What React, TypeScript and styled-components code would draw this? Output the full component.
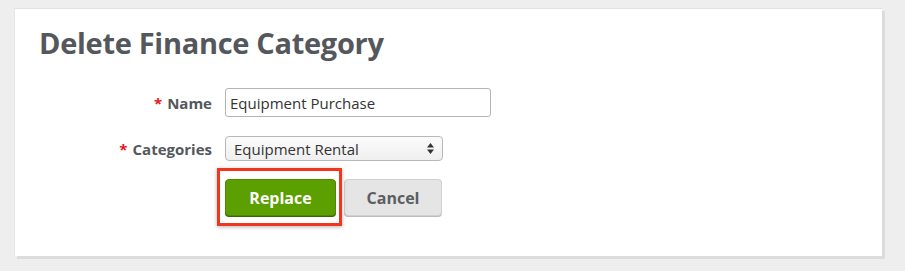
import styled, { createGlobalStyle } from "styled-components";

const GlobalStyle = createGlobalStyle`
  body {
    margin: 0;
    background: #eeeeee;
    font-family: "Open Sans", "Liberation Sans", sans-serif;
  }
`;

const Page = styled.div`
  padding: 8px 23px 0 14px;
  height: 271px;
  box-sizing: border-box;
`;

const Card = styled.div`
  width: 868px;
  height: 248px;
  box-sizing: border-box;
  background: #ffffff;
  border-top: 1px solid #e2e2e2;
  border-left: 1px solid #e6e6e6;
  box-shadow: 3px 3px 0 #dcdcdc;
  padding: 14px 0 0 0;
`;

const Title = styled.h1`
  margin: 0 0 0 24px;
  font-size: 29px;
  line-height: 40px;
  font-weight: 700;
  color: #54575b;
  letter-spacing: -0.3px;
`;

const Form = styled.div`
  margin-top: 25px;
  display: grid;
  grid-template-columns: 197px auto;
  column-gap: 13px;
  row-gap: 19px;
  align-items: center;
  justify-items: start;
`;

const Label = styled.label`
  justify-self: end;
  font-size: 15px;
  font-weight: 700;
  color: #54575b;
  white-space: nowrap;
`;

const Star = styled.span`
  color: #e8141a;
  margin-right: 5px;
`;

const TextInput = styled.input`
  width: 266px;
  height: 29px;
  box-sizing: border-box;
  border: 1px solid #b5b5b5;
  border-radius: 3px;
  padding: 0 4px;
  font-family: inherit;
  font-size: 15px;
  color: #333333;
  background: #ffffff;
  outline: none;
`;

const SelectBox = styled.div`
  position: relative;
  width: 218px;
  height: 25px;
  box-sizing: border-box;
  border: 1px solid #b8b8b8;
  border-radius: 4px;
  background: linear-gradient(#fbfbfb, #efefef);
  display: flex;
  align-items: center;
  padding: 0 8px;
  font-size: 15px;
  color: #333333;
`;

const Arrows = styled.svg`
  margin-left: auto;
`;

const Actions = styled.div`
  grid-column: 2;
  display: flex;
  gap: 8px;
  margin-top: -1px;
`;

const Highlight = styled.div`
  position: relative;
  &::after {
    content: "";
    position: absolute;
    left: -8px;
    top: -11px;
    right: -6px;
    bottom: -10px;
    border: 3px solid #f2361d;
    box-shadow: 0 1px 4px rgba(0, 0, 0, 0.3);
    pointer-events: none;
  }
`;

const Button = styled.button<{ $primary?: boolean }>`
  height: 37px;
  box-sizing: border-box;
  border-radius: 4px;
  font-family: inherit;
  font-size: 16px;
  font-weight: 700;
  cursor: pointer;
  ${(p) =>
    p.$primary
      ? `
    width: 111px;
    background: #5c9f00;
    color: #ffffff;
    border: 1px solid #4f8a00;
    box-shadow: 0 1px 0 #3a6600;
  `
      : `
    width: 98px;
    background: #e5e5e5;
    color: #5b5e62;
    border: 1px solid #d0d0d0;
    box-shadow: 0 1px 0 #bdbdbd;
  `}
`;

export default function App() {
  return (
    <>
      <GlobalStyle />
      <Page>
        <Card>
          <Title>Delete Finance Category</Title>
          <Form>
            <Label>
              <Star>*</Star>Name
            </Label>
            <TextInput defaultValue="Equipment Purchase" />
            <Label>
              <Star>*</Star>Categories
            </Label>
            <SelectBox>
              Equipment Rental
              <Arrows width="7" height="11" viewBox="0 0 7 11">
                <path d="M3.5 0 L7 4.5 H0 Z M3.5 11 L0 6.5 H7 Z" fill="#333" />
              </Arrows>
            </SelectBox>
            <Actions>
              <Highlight>
                <Button $primary>Replace</Button>
              </Highlight>
              <Button>Cancel</Button>
            </Actions>
          </Form>
        </Card>
      </Page>
    </>
  );
}
